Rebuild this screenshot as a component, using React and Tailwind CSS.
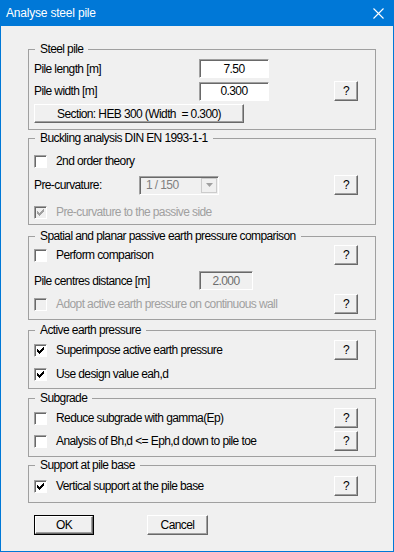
import React from "react";

const raised =
  "border border-t-white border-l-white border-r-[#696969] border-b-[#696969] shadow-[inset_-1px_-1px_0_#a0a0a0] bg-[#f0f0f0]";
const sunken =
  "border border-t-[#a0a0a0] border-l-[#a0a0a0] border-r-white border-b-white shadow-[inset_1px_1px_0_#696969]";

function Check({ checked, disabled }) {
  const ink = disabled ? "#a0a0a0" : "#000000";
  return (
    <span
      className={`flex h-[13px] w-[13px] shrink-0 ${sunken} ${disabled ? "bg-[#f0f0f0]" : "bg-white"}`}
    >
      {checked && (
        <svg width="11" height="11" viewBox="0 0 11 11" shapeRendering="crispEdges">
          <rect x="2" y="4" width="1" height="3" fill={ink} />
          <rect x="3" y="5" width="1" height="3" fill={ink} />
          <rect x="4" y="6" width="1" height="3" fill={ink} />
          <rect x="5" y="5" width="1" height="3" fill={ink} />
          <rect x="6" y="4" width="1" height="3" fill={ink} />
          <rect x="7" y="3" width="1" height="3" fill={ink} />
          <rect x="8" y="2" width="1" height="3" fill={ink} />
        </svg>
      )}
    </span>
  );
}

function Help() {
  return (
    <button className={`ml-auto flex h-[20px] w-[24px] items-center justify-center ${raised}`}>
      ?
    </button>
  );
}

function CheckRow({ label, checked, disabled, help, className = "" }) {
  return (
    <div className={`flex h-[20px] items-center ${className}`}>
      <Check checked={checked} disabled={disabled} />
      <span className={`ml-[9px] ${disabled ? "text-[#a0a0a0]" : "text-black"}`}>{label}</span>
      {help && <Help />}
    </div>
  );
}

function Group({ title, className = "", children }) {
  return (
    <div className={`border border-[#a0a0a0] ${className}`}>
      <div className="-mt-[9px] ml-[6px] w-fit bg-[#f0f0f0] pl-[5px] pr-[5px] leading-[16px]">
        {title}
      </div>
      <div className="pl-[5px] pr-[17px]">{children}</div>
    </div>
  );
}

export default function App() {
  return (
    <div className="flex h-[552px] w-[394px] flex-col bg-[#0078d7] font-['Liberation_Sans',Arial,sans-serif] text-[12px] leading-[16px] tracking-[-0.6px] text-black">
      <div className="flex h-[26px] shrink-0 items-center pl-[6px] pr-[10px] text-[12px] tracking-[-0.2px] text-white">
        <span>Analyse steel pile</span>
        <svg className="ml-auto" width="11" height="11" viewBox="0 0 11 11">
          <path d="M0.5 0.5 L10.5 10.5 M10.5 0.5 L0.5 10.5" stroke="white" strokeWidth="1.1" />
        </svg>
      </div>

      <div className="mx-[1px] mb-[1px] flex-1 bg-[#f0f0f0] pl-[27px] pr-[17px]">
        <Group title="Steel pile" className="mt-[23px]">
          <div className="pt-[2px] pb-[6px]">
            <div className="flex h-[19px] items-center">
              <span className="w-[165px]">Pile length [m]</span>
              <div className={`flex h-[19px] w-[70px] items-center justify-center bg-white ${sunken}`}>
                7.50
              </div>
            </div>
            <div className="mt-[3px] flex h-[20px] items-center">
              <span className="w-[165px]">Pile width [m]</span>
              <div className={`flex h-[19px] w-[70px] items-center justify-center bg-white ${sunken}`}>
                0.300
              </div>
              <Help />
            </div>
            <button className={`mt-[3px] flex h-[19px] w-[210px] items-center justify-center ${raised}`}>
              Section: HEB 300 (Width&nbsp; = 0.300)
            </button>
          </div>
        </Group>

        <Group title="Buckling analysis DIN EN 1993-1-1" className="mt-[8px]">
          <div className="pt-[5px] pb-[2px]">
            <CheckRow label="2nd order theory" className="h-[19px]" />
            <div className="mt-[4px] flex h-[20px] items-center">
              <span className="w-[105px]">Pre-curvature:</span>
              <div className={`flex h-[19px] w-[80px] items-center bg-[#f0f0f0] pl-[6px] pr-[1px] text-[#808080] ${sunken}`}>
                <span>1 / 150</span>
                <span className="ml-auto flex h-[15px] w-[16px] items-center justify-center border border-[#cccccc] bg-[#f0f0f0]">
                  <svg width="7" height="4" viewBox="0 0 7 4">
                    <path d="M0 0 H7 L3.5 4 Z" fill="#a0a0a0" />
                  </svg>
                </span>
              </div>
              <Help />
            </div>
            <CheckRow label="Pre-curvature to the passive side" checked disabled className="mt-[7px]" />
          </div>
        </Group>

        <Group title="Spatial and planar passive earth pressure comparison" className="mt-[11px]">
          <div className="pt-[1px] pb-[5px]">
            <CheckRow label="Perform comparison" help />
            <div className="mt-[6px] flex h-[19px] items-center">
              <span className="w-[165px]">Pile centres distance [m]</span>
              <div className={`flex h-[19px] w-[54px] items-center justify-center bg-[#f0f0f0] text-[#6d6d6d] ${sunken}`}>
                2.000
              </div>
            </div>
            <CheckRow label="Adopt active earth pressure on continuous wall" disabled help className="mt-[4px]" />
          </div>
        </Group>

        <Group title="Active earth pressure" className="mt-[10px]">
          <div className="pt-[2px] pb-[4px]">
            <CheckRow label="Superimpose active earth pressure" checked help />
            <CheckRow label="Use design value eah,d" checked className="mt-[4px]" />
          </div>
        </Group>

        <Group title="Subgrade" className="mt-[9px]">
          <div className="pt-[2px] pb-[5px]">
            <CheckRow label="Reduce subgrade with gamma(Ep)" help />
            <CheckRow label="Analysis of Bh,d <= Eph,d down to pile toe" help className="mt-[3px]" />
          </div>
        </Group>

        <Group title="Support at pile base" className="mt-[8px]">
          <div className="pt-[3px] pb-[6px]">
            <CheckRow label="Vertical support at the pile base" checked help />
          </div>
        </Group>

        <div className="mt-[12px] flex pl-[6px]">
          <button className="h-[20px] w-[60px] border border-black">
            <span className={`flex h-full w-full items-center justify-center ${raised}`}>OK</span>
          </button>
          <button className={`ml-[53px] flex h-[20px] w-[61px] items-center justify-center ${raised}`}>
            Cancel
          </button>
        </div>
      </div>
    </div>
  );
}
